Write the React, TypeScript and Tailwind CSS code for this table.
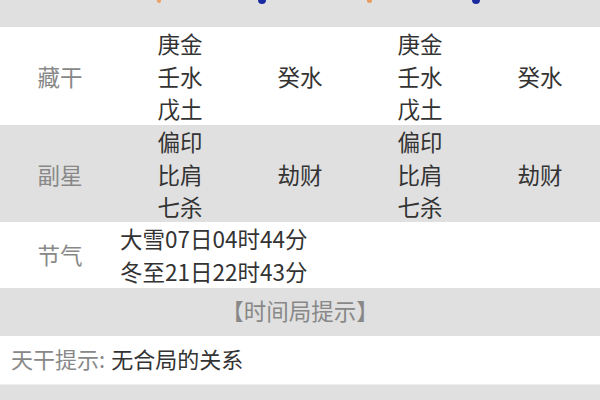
import React from 'react';

const font = { fontFamily: '"Noto Sans CJK SC", "Noto Sans", sans-serif' };

function Cell({ lines }: { lines: string[] }) {
  return (
    <div className="flex flex-col items-center justify-center text-[#333]">
      {lines.map((l, i) => (
        <div key={i}>{l}</div>
      ))}
    </div>
  );
}

export default function App() {
  const cang = ['庚金', '壬水', '戊土'];
  const fu = ['偏印', '比肩', '七杀'];
  return (
    <main className="w-[600px] h-[400px] overflow-hidden bg-white text-[22.5px] leading-[32.5px]" style={font}>
      {/* cut-off row above */}
      <div className="h-[27px] bg-[#e0e0e0] flex items-start">
        <span className="ml-[157px] w-[4px] h-[3px] bg-[#f0a060] rounded-b-sm" />
        <span className="ml-[97px] w-[8px] h-[4px] bg-[#1a2aa0] rounded-b" />
        <span className="ml-[101px] w-[5px] h-[3px] bg-[#e89a60] rounded-b-sm" />
        <span className="ml-[100px] w-[8px] h-[4px] bg-[#1a2aa0] rounded-b" />
      </div>

      <div className="grid grid-cols-5 h-[98px] items-center pb-[4px]">
        <div className="text-center text-[#888]">藏干</div>
        <Cell lines={cang} />
        <Cell lines={['癸水']} />
        <Cell lines={cang} />
        <Cell lines={['癸水']} />
      </div>

      <div className="grid grid-cols-5 h-[97px] items-center pb-[4px] bg-[#e0e0e0]">
        <div className="text-center text-[#888]">副星</div>
        <Cell lines={fu} />
        <Cell lines={['劫财']} />
        <Cell lines={fu} />
        <Cell lines={['劫财']} />
      </div>

      <div className="grid grid-cols-5 h-[66px] items-center pb-[4px]">
        <div className="text-center text-[#888]">节气</div>
        <div className="col-span-4 text-[#333]">
          <div>大雪07日04时44分</div>
          <div>冬至21日22时43分</div>
        </div>
      </div>

      <div className="h-[48px] bg-[#e0e0e0] flex items-center justify-center pb-[3px] text-[#888]">
        【时间局提示】
      </div>

      <div className="h-[49px] flex items-center pb-[3px] px-[11px] border-b border-[#f0f0f0] text-[22px]">
        <span className="text-[#888]">天干提示:</span>
        <span className="ml-[6px] text-[#333]">无合局的关系</span>
      </div>

      <div className="h-[20px] bg-[#e0e0e0]" />
    </main>
  );
}
